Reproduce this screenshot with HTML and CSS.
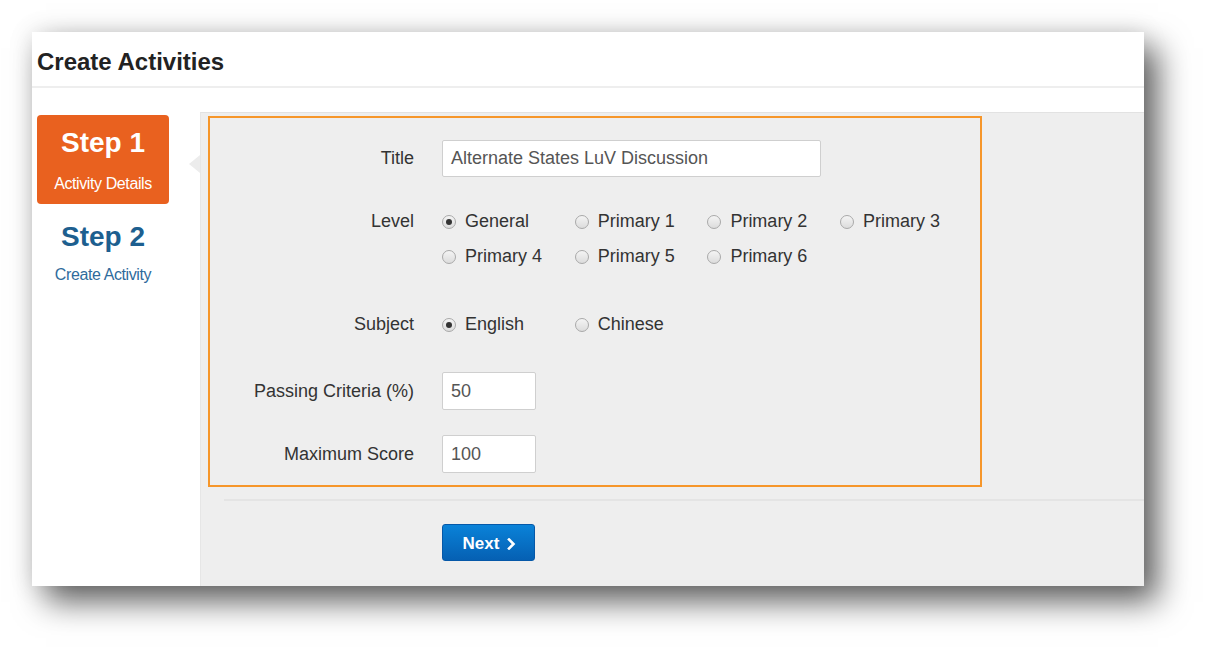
FILE: index.html
```html
<!DOCTYPE html>
<html>
<head>
<meta charset="utf-8">
<link rel="stylesheet" href="styles.css">
</head>
<body>
<div class="card">
  <div class="card-header"><h1>Create Activities</h1></div>
  <div class="card-body">
    <aside class="sidebar">
      <div class="step active">
        <div class="step-num">Step 1</div>
        <div class="step-name">Activity Details</div>
      </div>
      <div class="step">
        <div class="step-num">Step 2</div>
        <div class="step-name">Create Activity</div>
      </div>
    </aside>
    <main class="main">
      <div class="highlight">
        <div class="row row-title">
          <label class="label">Title</label>
          <div class="input wide">Alternate States LuV Discussion</div>
        </div>
        <div class="row row-level">
          <label class="label">Level</label>
          <div class="radios">
            <span class="opt"><span class="radio checked"></span>General</span>
            <span class="opt"><span class="radio"></span>Primary 1</span>
            <span class="opt"><span class="radio"></span>Primary 2</span>
            <span class="opt"><span class="radio"></span>Primary 3</span>
            <span class="opt"><span class="radio"></span>Primary 4</span>
            <span class="opt"><span class="radio"></span>Primary 5</span>
            <span class="opt"><span class="radio"></span>Primary 6</span>
          </div>
        </div>
        <div class="row row-subject">
          <label class="label">Subject</label>
          <div class="radios">
            <span class="opt"><span class="radio checked"></span>English</span>
            <span class="opt"><span class="radio"></span>Chinese</span>
          </div>
        </div>
        <div class="row row-pass">
          <label class="label">Passing Criteria (%)</label>
          <div class="input small">50</div>
        </div>
        <div class="row row-max">
          <label class="label">Maximum Score</label>
          <div class="input small">100</div>
        </div>
      </div>
      <div class="divider"></div>
      <div class="actions">
        <button class="btn-next">Next <svg width="9" height="12" viewBox="0 0 9 12"><path d="M2 1.5 L6.5 6 L2 10.5" fill="none" stroke="#fff" stroke-width="2.6" stroke-linecap="square"/></svg></button>
      </div>
    </main>
  </div>
</div>
</body>
</html>
```
FILE: styles.css
```css
* { box-sizing: border-box; }
html, body { margin: 0; padding: 0; background: #fff; }
body {
  font-family: "Liberation Sans", Arial, sans-serif;
  color: #333;
  padding: 32px 0 66px 32px;
  min-height: 652px;
}
.card {
  width: 1112px;
  height: 554px;
  background: #fff;
  display: flex;
  flex-direction: column;
  box-shadow: 14px 16px 30px rgba(0,0,0,0.6), 0 0 24px rgba(0,0,0,0.12);
}
.card-header {
  height: 56px;
  border-bottom: 2px solid #eeeeee;
  padding: 16px 0 0 5px;
}
.card-header h1 {
  margin: 0;
  font-size: 24px;
  line-height: 28px;
  font-weight: bold;
  color: #222;
}
.card-body {
  flex: 1;
  display: flex;
}
.sidebar {
  width: 168px;
  padding: 27px 0 0 5px;
  background: #fff;
}
.step {
  width: 132px;
  text-align: center;
  color: #1d5f8f;
}
.step.active {
  height: 89px;
  background: #e9611f;
  border-radius: 4px;
  color: #fff;
  padding-top: 11px;
  margin-bottom: 16px;
}
.step-num {
  font-size: 28px;
  font-weight: bold;
  line-height: 34px;
}
.step.active .step-name { color: #fff; margin-top: 14px; }
.step-name {
  font-size: 16px;
  letter-spacing: -0.4px;
  line-height: 20px;
  color: #2f6b9c;
  margin-top: 11px;
}
.main {
  flex: 1;
  margin-top: 24px;
  background: #eeeeee;
  border-top: 1px solid #e2e2e2;
  border-left: 1px solid #e6e6e6;
  position: relative;
}
.main::before {
  content: "";
  position: absolute;
  left: -12px;
  top: 42px;
  border-top: 9px solid transparent;
  border-bottom: 9px solid transparent;
  border-right: 11px solid #ececec;
}
.highlight {
  margin: 3px 0 0 7px;
  width: 774px;
  height: 371px;
  border: 2px solid #f6962a;
  padding-top: 22px;
}
.row {
  display: grid;
  grid-template-columns: 204px 1fr;
  column-gap: 28px;
  align-items: start;
}
.label {
  text-align: right;
  font-size: 18px;
  line-height: 35px;
  color: #333;
}
.input {
  background: #fff;
  border: 1px solid #cfcfcf;
  border-radius: 2px;
  font-size: 18px;
  color: #555;
  padding: 0 8px;
  height: 37px;
  line-height: 35px;
}
.input.wide { width: 379px; }
.input.small { width: 94px; height: 38px; line-height: 36px; }
.row-title .label { line-height: 37px; }
.row-level { margin-top: 27px; }
.row-subject { margin-top: 33px; }
.row-pass { margin-top: 30px; }
.row-max { margin-top: 25px; }
.row-pass .label, .row-max .label { line-height: 38px; }
.radios {
  display: grid;
  grid-template-columns: repeat(4, 132.7px);
}
.opt {
  display: flex;
  align-items: center;
  font-size: 18px;
  line-height: 35px;
  color: #333;
}
.radio {
  width: 14px;
  height: 14px;
  border-radius: 50%;
  border: 1px solid #a9a9a9;
  background: linear-gradient(#f4f4f4, #dcdcdc);
  margin-right: 9px;
  flex: none;
  display: flex;
  align-items: center;
  justify-content: center;
}
.radio.checked::after {
  content: "";
  width: 6px;
  height: 6px;
  border-radius: 50%;
  background: #333;
}
.divider {
  margin: 12px 0 0 23px;
  height: 2px;
  background: #e4e4e4;
}
.actions {
  padding: 23px 0 0 241px;
}
.btn-next {
  width: 93px;
  height: 37px;
  border: 1px solid #0558a8;
  border-radius: 3px;
  background: linear-gradient(#0a82d8, #0560b3);
  color: #fff;
  font-family: "Liberation Sans", Arial, sans-serif;
  font-size: 17px;
  font-weight: bold;
  display: flex;
  align-items: center;
  justify-content: center;
  gap: 8px;
  padding: 2px 0 0 2px;
}
```
